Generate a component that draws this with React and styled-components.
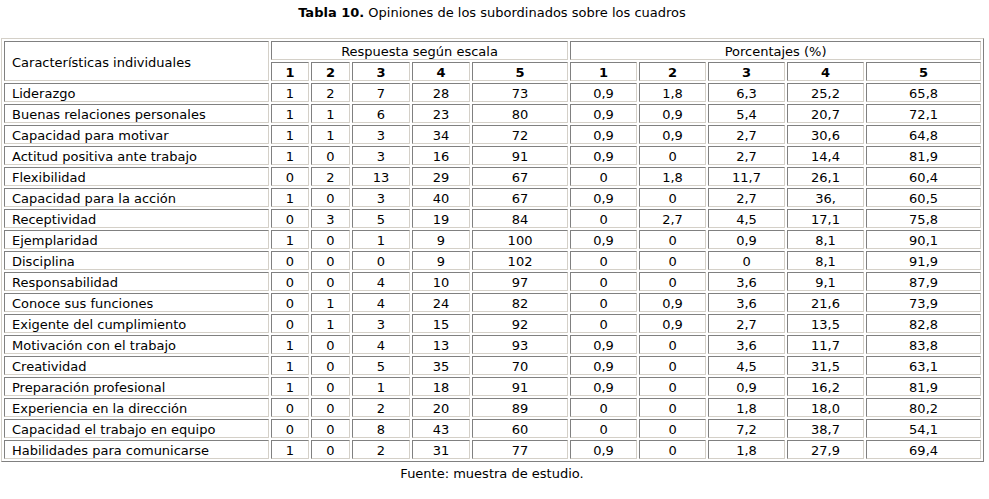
import React from "react";
import styled, { createGlobalStyle } from "styled-components";

const GlobalStyle = createGlobalStyle`
  body {
    margin: 0;
    background: #ffffff;
    color: #000000;
    font-family: "DejaVu Sans", Verdana, sans-serif;
    font-size: 13px;
  }
`;

const Page = styled.div`
  width: 984px;
  padding-top: 4px;
`;

const Caption = styled.p`
  margin: 0 0 16px 0;
  text-align: center;
  line-height: 18px;

  b {
    font-weight: bold;
  }
`;

const Table = styled.table`
  margin-left: 1px;
  width: 983px;
  table-layout: fixed;
  border-collapse: separate;
  border-spacing: 2px;
  border: 1px solid;
  border-color: #d4d0c8 #808080 #808080 #d4d0c8;
`;

const Cell = styled.td`
  height: 15px;
  padding: 2px ${(p) => (p.$left ? "7px" : "1px")} 0;
  line-height: 15px;
  text-align: ${(p) => (p.$left ? "left" : "center")};
  font-weight: ${(p) => (p.$bold ? "bold" : "normal")};
  white-space: nowrap;
  border: 1px solid;
  border-color: #808080 #d4d0c8 #d4d0c8 #808080;
`;

const Source = styled.p`
  margin: 3px 0 0 0;
  text-align: center;
  line-height: 18px;
`;

const widths = [265, 38, 39, 58, 58, 96, 67, 67, 77, 77, 115];

const rows = [
  ["Liderazgo", "1", "2", "7", "28", "73", "0,9", "1,8", "6,3", "25,2", "65,8"],
  ["Buenas relaciones personales", "1", "1", "6", "23", "80", "0,9", "0,9", "5,4", "20,7", "72,1"],
  ["Capacidad para motivar", "1", "1", "3", "34", "72", "0,9", "0,9", "2,7", "30,6", "64,8"],
  ["Actitud positiva ante trabajo", "1", "0", "3", "16", "91", "0,9", "0", "2,7", "14,4", "81,9"],
  ["Flexibilidad", "0", "2", "13", "29", "67", "0", "1,8", "11,7", "26,1", "60,4"],
  ["Capacidad para la acción", "1", "0", "3", "40", "67", "0,9", "0", "2,7", "36,", "60,5"],
  ["Receptividad", "0", "3", "5", "19", "84", "0", "2,7", "4,5", "17,1", "75,8"],
  ["Ejemplaridad", "1", "0", "1", "9", "100", "0,9", "0", "0,9", "8,1", "90,1"],
  ["Disciplina", "0", "0", "0", "9", "102", "0", "0", "0", "8,1", "91,9"],
  ["Responsabilidad", "0", "0", "4", "10", "97", "0", "0", "3,6", "9,1", "87,9"],
  ["Conoce sus funciones", "0", "1", "4", "24", "82", "0", "0,9", "3,6", "21,6", "73,9"],
  ["Exigente del cumplimiento", "0", "1", "3", "15", "92", "0", "0,9", "2,7", "13,5", "82,8"],
  ["Motivación con el trabajo", "1", "0", "4", "13", "93", "0,9", "0", "3,6", "11,7", "83,8"],
  ["Creatividad", "1", "0", "5", "35", "70", "0,9", "0", "4,5", "31,5", "63,1"],
  ["Preparación profesional", "1", "0", "1", "18", "91", "0,9", "0", "0,9", "16,2", "81,9"],
  ["Experiencia en la dirección", "0", "0", "2", "20", "89", "0", "0", "1,8", "18,0", "80,2"],
  ["Capacidad el trabajo en equipo", "0", "0", "8", "43", "60", "0", "0", "7,2", "38,7", "54,1"],
  ["Habilidades para comunicarse", "1", "0", "2", "31", "77", "0,9", "0", "1,8", "27,9", "69,4"],
];

const scale = ["1", "2", "3", "4", "5"];

export default function App() {
  return (
    <Page>
      <GlobalStyle />
      <Caption>
        <b>Tabla 10.</b> Opiniones de los subordinados sobre los cuadros
      </Caption>
      <Table>
        <colgroup>
          {widths.map((w, i) => (
            <col key={i} style={{ width: w }} />
          ))}
        </colgroup>
        <tbody>
          <tr>
            <Cell $left rowSpan={2}>Características individuales</Cell>
            <Cell colSpan={5}>Respuesta según escala</Cell>
            <Cell colSpan={5}>Porcentajes (%)</Cell>
          </tr>
          <tr>
            {scale.map((s) => (
              <Cell key={"r" + s} $bold>{s}</Cell>
            ))}
            {scale.map((s) => (
              <Cell key={"p" + s} $bold>{s}</Cell>
            ))}
          </tr>
          {rows.map((row) => (
            <tr key={row[0]}>
              {row.map((v, i) => (
                <Cell key={i} $left={i === 0}>{v}</Cell>
              ))}
            </tr>
          ))}
        </tbody>
      </Table>
      <Source>Fuente: muestra de estudio.</Source>
    </Page>
  );
}
